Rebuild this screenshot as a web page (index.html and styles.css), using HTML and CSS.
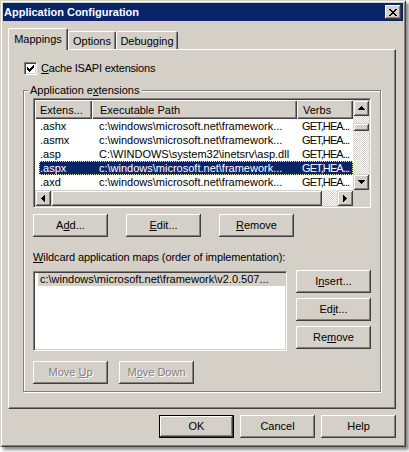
FILE: index.html
```html
<!DOCTYPE html>
<html lang="en">
<head>
<meta charset="utf-8">
<title>Application Configuration</title>
<link rel="stylesheet" href="styles.css">
</head>
<body>
<div class="window">
  <div class="titlebar">
    <span class="title">Application Configuration</span>
    <span class="caption-btn">
      <svg width="8" height="7" viewBox="0 0 8 7" shape-rendering="crispEdges"><path d="M0 0h2v1h1v1h2V1h1V0h2v1H7v1H6v1H5v1h1v1h1v1h1v1H6V6H5V5H3v1H2v1H0V6h1V5h1V4h1V3H2V2H1V1H0z"/></svg>
    </span>
  </div>
  <div class="client">
    <div class="tabs">
      <div class="tab tab-active tab-mappings">Mappings</div>
      <div class="tab tab-options">Options</div>
      <div class="tab tab-debugging">Debugging</div>
    </div>
    <div class="panel">
      <div class="check-row">
        <span class="checkbox"><svg width="7" height="7" viewBox="0 0 7 7" shape-rendering="crispEdges"><path d="M0 2h1v1h1v1h1V3h1V2h1V1h1V0h1v3H6v1H5v1H4v1H3v1H2V6H1V5H0z"/></svg></span>
        <span class="check-label"><u>C</u>ache ISAPI extensions</span>
      </div>
      <fieldset class="group">
        <legend>Application e<u>x</u>tensions</legend>
        <div class="listview">
          <div class="lv-body">
            <div class="lv-header">
              <div class="lv-hcell hc1">Extens...</div>
              <div class="lv-hcell hc2">Executable Path</div>
              <div class="lv-hcell hc3">Verbs</div>
            </div>
            <div class="lv-row"><span>.ashx</span><span>c:\windows\microsoft.net\framework...</span><span>GET,HEA...</span></div>
            <div class="lv-row"><span>.asmx</span><span>c:\windows\microsoft.net\framework...</span><span>GET,HEA...</span></div>
            <div class="lv-row"><span>.asp</span><span>C:\WINDOWS\system32\inetsrv\asp.dll</span><span>GET,HEA...</span></div>
            <div class="lv-row selected"><span>.aspx</span><span>c:\windows\microsoft.net\framework...</span><span>GET,HEA...</span></div>
            <div class="lv-row"><span>.axd</span><span>c:\windows\microsoft.net\framework...</span><span>GET,HEA...</span></div>
          </div>
          <div class="vscroll">
            <div class="sb-btn"><svg width="7" height="4" viewBox="0 0 7 4" shape-rendering="crispEdges"><path d="M3 0h1v1h1v1h1v1h1v1H0V3h1V2h1V1h1z"/></svg></div>
            <div class="sb-track"><div class="sb-thumb vthumb"></div></div>
            <div class="sb-btn"><svg width="7" height="4" viewBox="0 0 7 4" shape-rendering="crispEdges"><path d="M0 0h7v1H6v1H5v1H4v1H3V3H2V2H1V1H0z"/></svg></div>
          </div>
          <div class="hscroll">
            <div class="sb-btn"><svg width="4" height="7" viewBox="0 0 4 7" shape-rendering="crispEdges"><path d="M3 0h1v7H3V6H2V5H1V4H0V3h1V2h1V1h1z"/></svg></div>
            <div class="sb-thumb hthumb"></div>
            <div class="sb-track"></div>
            <div class="sb-btn"><svg width="4" height="7" viewBox="0 0 4 7" shape-rendering="crispEdges"><path d="M0 0h1v1h1v1h1v1h1v1H3v1H2v1H1v1H0z"/></svg></div>
          </div>
          <div class="sb-corner"></div>
        </div>
        <div class="btn-row">
          <button class="btn">A<u>d</u>d...</button>
          <button class="btn"><u>E</u>dit...</button>
          <button class="btn"><u>R</u>emove</button>
        </div>
        <div class="wild-label"><u>W</u>ildcard application maps (order of implementation):</div>
        <div class="wild-row">
          <div class="listbox">
            <div class="lb-item">c:\windows\microsoft.net\framework\v2.0.507...</div>
          </div>
          <div class="btn-col">
            <button class="btn">I<u>n</u>sert...</button>
            <button class="btn">Ed<u>i</u>t...</button>
            <button class="btn">Re<u>m</u>ove</button>
          </div>
        </div>
        <div class="btn-row move-row">
          <button class="btn" disabled>Move <u>U</u>p</button>
          <button class="btn" disabled>M<u>o</u>ve Down</button>
        </div>
      </fieldset>
    </div>
    <div class="footer">
      <button class="btn btn-default">OK</button>
      <button class="btn">Cancel</button>
      <button class="btn">Help</button>
    </div>
  </div>
</div>
</body>
</html>
```
FILE: styles.css
```css
* { box-sizing: border-box; }
html, body { margin: 0; padding: 0; }
body {
  width: 409px;
  height: 452px;
  overflow: hidden;
  background: #ffffff;
  font-family: "Liberation Sans", Arial, sans-serif;
  font-size: 11px;
  line-height: 13px;
  color: #000;
}
u { text-decoration: underline; text-underline-offset: 1px; }

.window {
  width: 406px;
  height: 447px;
  padding: 3px;
  background: #d4d0c8;
  display: flex;
  flex-direction: column;
  box-shadow:
    inset 1px 1px 0 #d4d0c8,
    inset -1px -1px 0 #404040,
    inset 2px 2px 0 #ffffff,
    inset -2px -2px 0 #808080,
    3px 3px 3px rgba(0, 0, 0, 0.45);
}

.titlebar {
  height: 18px;
  flex: none;
  background: #0a246a;
  color: #fff;
  display: flex;
  align-items: center;
  justify-content: space-between;
  padding: 0 2px 0 1px;
}
.title { font-weight: bold; }
.caption-btn {
  width: 16px;
  height: 14px;
  background: #d4d0c8;
  display: flex;
  align-items: center;
  justify-content: center;
  box-shadow: inset -1px -1px 0 #404040, inset 1px 1px 0 #fff, inset -2px -2px 0 #808080;
}
.caption-btn svg { display: block; }

.client {
  flex: 1;
  padding: 7px 7px 0 5px;
  display: flex;
  flex-direction: column;
}

.tabs {
  display: flex;
  align-items: flex-end;
  height: 21px;
  flex: none;
  position: relative;
  z-index: 1;
}
.tab {
  height: 18px;
  padding-top: 3px;
  text-align: center;
  background: #d4d0c8;
  border-top: 1px solid #fff;
  border-left: 1px solid #fff;
  border-right: 1px solid #404040;
  box-shadow: inset -1px 0 0 #808080;
  border-top-left-radius: 2px;
  border-top-right-radius: 2px;
}
.tab-active { height: 22px; margin-bottom: -1px; padding-top: 4px; }
.tab-mappings { width: 60px; }
.tab-options { width: 48px; }
.tab-debugging { width: 62px; }

.panel {
  height: 360px;
  flex: none;
  border: 1px solid;
  border-color: #fff #404040 #404040 #fff;
  box-shadow: inset -1px -1px 0 #808080;
  padding: 12px 14px 0 14px;
  display: flex;
  flex-direction: column;
}

.check-row { display: flex; align-items: center; height: 13px; margin-left: 1px; }
.checkbox {
  width: 13px;
  height: 13px;
  padding: 2px;
  background: #fff;
  border: 1px solid;
  border-color: #808080 #fff #fff #808080;
  box-shadow: inset 1px 1px 0 #404040, inset -1px -1px 0 #d4d0c8;
}
.checkbox svg { display: block; }
.check-label { margin-left: 4px; letter-spacing: -0.2px; }

.group {
  margin: 9px 0 0;
  padding: 1px 9px 7px;
  border: 1px solid #808080;
  box-shadow: inset 1px 1px 0 #fff, 1px 1px 0 #fff;
  min-width: 0;
}
.group legend {
  padding: 0 3px 0 2px;
  margin-left: -5px;
  line-height: 13px;
  background: #d4d0c8;
}

.listview {
  height: 110px;
  padding: 1px;
  background: #fff;
  border: 1px solid;
  border-color: #808080 #fff #fff #808080;
  box-shadow: inset 1px 1px 0 #404040, inset -1px -1px 0 #d4d0c8;
  display: grid;
  grid-template-columns: 318px 16px;
  grid-template-rows: 90px 16px;
}
.lv-body { overflow: hidden; }
.lv-header {
  display: grid;
  grid-template-columns: 57px 205px 56px;
  height: 19px;
}
.lv-hcell {
  background: #d4d0c8;
  box-shadow: inset 1px 1px 0 #fff, inset -1px -1px 0 #404040, inset -2px -2px 0 #808080;
  padding-top: 4px;
  white-space: nowrap;
  overflow: hidden;
}
.hc1 { padding-left: 5px; }
.hc2 { padding-left: 8px; }
.hc3 { padding-left: 6px; }
.lv-row {
  display: grid;
  grid-template-columns: 53px 205px 56px;
  margin-left: 4px;
  height: 14px;
  line-height: 14px;
  white-space: nowrap;
}
.lv-row > span { overflow: hidden; padding-left: 7px; }
.lv-row > span:first-child { padding-left: 1px; }
.lv-row > span:last-child { padding-left: 5px; letter-spacing: -0.9px; }
.lv-row.selected {
  background: #0a246a;
  color: #fff;
  outline: 1px dotted #e8e4b0;
  outline-offset: -1px;
}

.vscroll { display: flex; flex-direction: column; }
.hscroll { display: flex; }
.sb-btn {
  width: 16px;
  height: 16px;
  flex: none;
  background: #d4d0c8;
  display: flex;
  align-items: center;
  justify-content: center;
  box-shadow: inset 1px 1px 0 #d4d0c8, inset -1px -1px 0 #404040, inset 2px 2px 0 #fff, inset -2px -2px 0 #808080;
}
.sb-btn svg { display: block; }
.sb-track {
  flex: 1;
  background: repeating-conic-gradient(#d4d0c8 0% 25%, #fff 0% 50%) 0 0 / 2px 2px;
}
.sb-thumb {
  background: #d4d0c8;
  box-shadow: inset 1px 1px 0 #d4d0c8, inset -1px -1px 0 #404040, inset 2px 2px 0 #fff, inset -2px -2px 0 #808080;
}
.vthumb { width: 16px; height: 8px; margin-top: 7px; }
.hthumb { width: 271px; height: 16px; flex: none; }
.sb-corner { background: #d4d0c8; }

.btn {
  width: 75px;
  height: 23px;
  flex: none;
  margin: 0;
  padding: 0;
  border: 0;
  background: #d4d0c8;
  font: inherit;
  line-height: 13px;
  color: #000;
  text-align: center;
  white-space: nowrap;
  box-shadow: inset -1px -1px 0 #404040, inset 1px 1px 0 #fff, inset -2px -2px 0 #808080;
}
.btn-default { border: 1px solid #000; }
.btn:disabled { color: #808080; text-shadow: 1px 1px 0 #fff; }

.btn-row { display: flex; gap: 18px; margin-top: 6px; }
.move-row { gap: 11px; margin-top: 10px; }
.wild-label { margin-top: 14px; white-space: nowrap; letter-spacing: -0.1px; }
.wild-row { display: flex; gap: 9px; margin-top: 6px; }
.listbox {
  width: 254px;
  height: 80px;
  margin-top: 1px;
  padding: 1px 1px 0 4px;
  background: #fff;
  border: 1px solid;
  border-color: #808080 #fff #fff #808080;
  box-shadow: inset 1px 1px 0 #404040, inset -1px -1px 0 #d4d0c8;
}
.lb-item {
  height: 13px;
  padding-left: 2px;
  background: #d4d0c8;
  white-space: nowrap;
  overflow: hidden;
}
.btn-col { display: flex; flex-direction: column; gap: 5px; }

.footer { display: flex; justify-content: flex-end; gap: 6px; margin-top: 6px; }
```
